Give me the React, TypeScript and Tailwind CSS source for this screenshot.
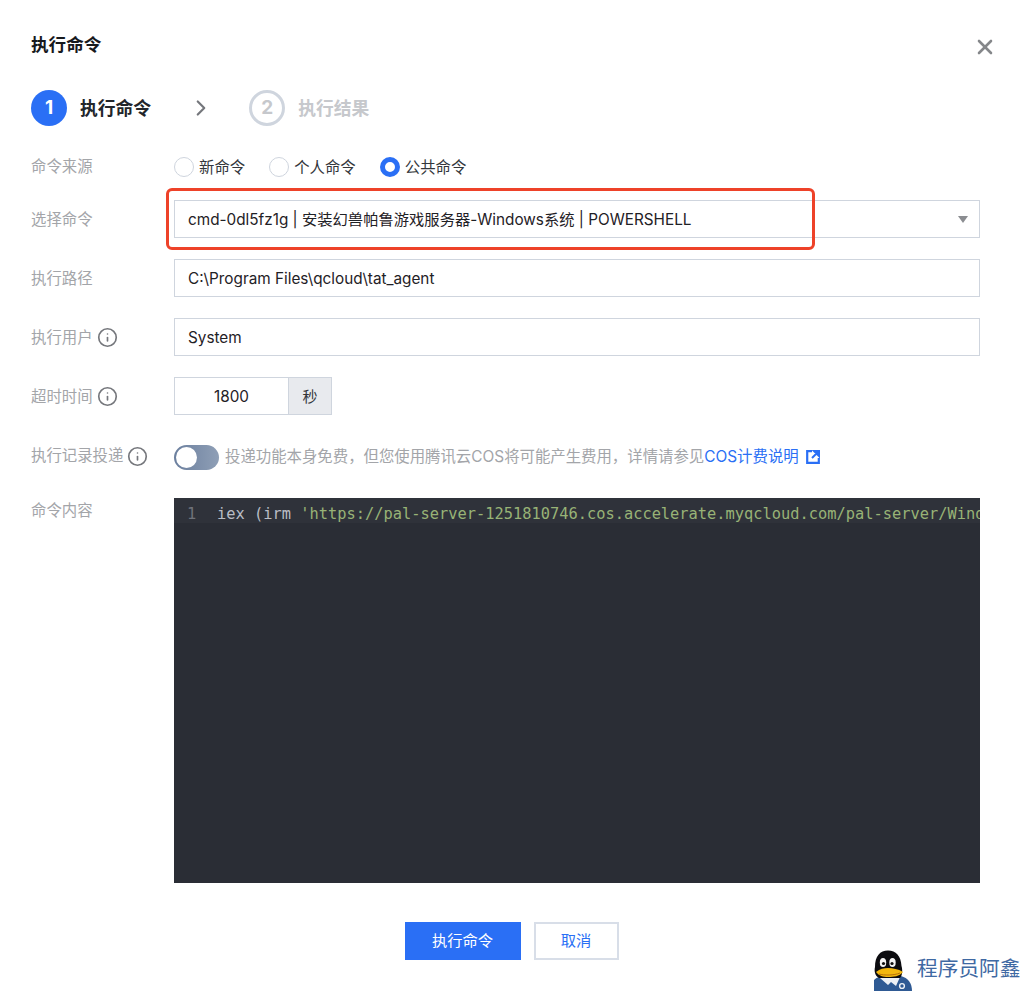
import { X, ChevronRight, Info } from "lucide-react";

const sans = "font-['Inter','Noto_Sans_CJK_SC',sans-serif]";

const Label = ({ text, tip, textClass = "mt-[2px]" }: { text: string; tip?: boolean; textClass?: string }) => (
  <div className="w-[143px] shrink-0 flex items-center gap-[4px] text-[15.4px] leading-[20px] text-[#a3a5a9]">
    <span className={textClass}>{text}</span>
    {tip && <Info size={21} strokeWidth={1.9} className="text-[#75777c]" />}
  </div>
);

const Radio = ({ text, checked }: { text: string; checked?: boolean }) => (
  <label className="flex items-center gap-[5px] text-[15.4px] leading-[20px] text-[#33363b]">
    {checked ? (
      <span className="w-[20px] h-[20px] rounded-full border-[5px] border-[#2a6ff5] bg-white" />
    ) : (
      <span className="w-[20px] h-[20px] rounded-full border border-[#cfd5de] bg-white" />
    )}
    <span className="mt-[2px]">{text}</span>
  </label>
);

const InputRow = ({ label, value, tip }: { label: string; value: string; tip?: boolean }) => (
  <div className="flex items-center">
    <Label text={label} tip={tip} />
    <div className="flex-1 h-[38px] border border-[#cfd5de] px-[13px] pt-[2px] flex items-center text-[15.3px] text-[#1f2126]">
      {value}
    </div>
  </div>
);

// 水印 logo
const Penguin = () => (
  <svg width="40" height="41" viewBox="0 0 40 41" className="shrink-0">
    <path d="M1 41 L1 30 C4 27 8 26 12 26 L28 26 C35 28 39 33 39 41 Z" fill="#2f5a94" />
    <path d="M7 28 L15 35 L18 32 L23 36 L27 27 L20 25 L10 25 Z" fill="#eef1f6" />
    <circle cx="29" cy="36" r="2.4" fill="none" stroke="#eef1f6" strokeWidth="1.4" />
    <path d="M2 17 C2 6 7 0.5 15 0.5 C23 0.5 28 6 28.5 16 C30 21 29 26 27 28 L6 28 C2 26 1 21 2 17 Z" fill="#0c0c10" />
    <ellipse cx="10" cy="12.5" rx="3.2" ry="4.6" fill="#f4f4f4" />
    <ellipse cx="19.5" cy="12.5" rx="3.2" ry="4.6" fill="#f4f4f4" />
    <circle cx="10.5" cy="13.5" r="1.6" fill="#111" />
    <circle cx="19" cy="13.5" r="1.6" fill="#111" />
    <path d="M3 22 C7 18.5 11 18 15 18 C20 18 25 19 30 22 C26 26.5 21 27 15 27 C10 27 6 26 3 22 Z" fill="#f2b70f" />
    <path d="M6 24 C11 25.5 21 25.5 27 23" stroke="#b5700a" strokeWidth="1" fill="none" />
  </svg>
);

export default function App() {
  return (
    <div className={`relative w-[1024px] h-[991px] overflow-hidden bg-white ${sans}`}>
      <div className="pl-[31px] pr-[44px]">
        {/* 标题 */}
        <div className="flex items-center justify-between pt-[33px] h-[57px]">
          <h2 className="text-[17.6px] leading-[22px] font-semibold text-[#17191d]">执行命令</h2>
          <button className="-mr-[17px] mt-[4px] text-[#85878a]">
            <X size={24} strokeWidth={2.6} />
          </button>
        </div>

        {/* 步骤 */}
        <div className="flex items-center mt-[33px] h-[36px]">
          <span className="w-[36px] h-[36px] rounded-full bg-[#2a6ff5] text-white flex items-center justify-center text-[19px] font-bold">1</span>
          <span className="ml-[13px] mt-[3px] text-[17.8px] font-semibold text-[#22252a]">执行命令</span>
          <ChevronRight size={26} strokeWidth={2} className="ml-[37px] text-[#75777c]" />
          <span className="ml-[35px] w-[36px] h-[36px] rounded-full border-[3px] border-[#cfd5de] text-[#c6c8cc] flex items-center justify-center text-[19px] font-bold">2</span>
          <span className="ml-[13px] mt-[3px] text-[17.8px] font-semibold text-[#c6c8cc]">执行结果</span>
        </div>

        {/* 表单 */}
        <div className="mt-[27px] flex items-center h-[28px]">
          <Label text="命令来源" textClass="" />
          <div className="flex items-center gap-[24px]">
            <Radio text="新命令" />
            <Radio text="个人命令" />
            <Radio text="公共命令" checked />
          </div>
        </div>

        <div className="mt-[19px] flex flex-col gap-[21px]">
          <div className="flex items-center">
            <Label text="选择命令" />
            <div className="flex-1 h-[38px] border border-[#cfd5de] pl-[13px] pr-[11px] flex items-center justify-between text-[15.3px] text-[#1f2126]">
              <span className="mt-[2px]">cmd-0dl5fz1g | 安装幻兽帕鲁游戏服务器-Windows系统 | POWERSHELL</span>
              <span className="w-0 h-0 border-x-[5.5px] border-x-transparent border-t-[7px] border-t-[#8b8d91]" />
            </div>
          </div>
          <InputRow label="执行路径" value="C:\Program Files\qcloud\tat_agent" />
          <InputRow label="执行用户" value="System" tip />
          <div className="flex items-center">
            <Label text="超时时间" tip />
            <div className="flex h-[38px]">
              <div className="w-[115px] border border-[#cfd5de] pt-[2px] flex items-center justify-center text-[15.3px] text-[#1f2126]">1800</div>
              <div className="w-[43px] border border-l-0 border-[#cfd5de] bg-[#e8eaee] pt-[2px] flex items-center justify-center text-[15px] text-[#33363b]">秒</div>
            </div>
          </div>
        </div>

        <div className="mt-[29px] flex items-center h-[26px]">
          <div className="mb-[2px]">
            <Label text="执行记录投递" tip textClass="" />
          </div>
          <span className="w-[45px] h-[25px] rounded-full bg-gradient-to-r from-[#6b7f9e] to-[#8f9fb6] flex items-center pl-[2px]">
            <span className="w-[21px] h-[21px] rounded-full bg-white" />
          </span>
          <span className="ml-[6px] text-[15.4px] text-[#a3a5a9] whitespace-nowrap">投递功能本身免费，但您使用腾讯云COS将可能产生费用，详情请参见</span>
          <span className="text-[15.4px] text-[#2a6ff5] whitespace-nowrap">COS计费说明</span>
          <svg width="14" height="14" viewBox="0 0 14 14" className="ml-[7px]">
            <path d="M6 1.2H1.2V12.8H12.8V8" fill="none" stroke="#2a6ff5" strokeWidth="2.2" />
            <path d="M8 1H13V6Z M12 2 L6 8" fill="#2a6ff5" stroke="#2a6ff5" strokeWidth="2" />
          </svg>
        </div>

        {/* 命令内容 */}
        <div className="mt-[28px] flex items-start">
          <div className="pt-[1px]">
            <Label text="命令内容" />
          </div>
          <div className="flex-1 h-[385px] bg-[#2a2d35] overflow-hidden font-['DejaVu_Sans_Mono',monospace] text-[15.37px]">
            <div className="h-[25px] pt-[8px] bg-[#2f323a] flex items-center whitespace-pre">
              <span className="w-[43px] shrink-0 pl-[13px] text-[#6f737b]">1</span>
              <span className="text-[#b9bdc5]">iex (irm </span>
              <span className="text-[#98b376]">'https://pal-server-1251810746.cos.accelerate.myqcloud.com/pal-server/Windows.ps1')</span>
            </div>
          </div>
        </div>

        {/* 按钮 */}
        <div className="mt-[39px] pl-[12px] flex justify-center gap-[13px] text-[15.3px]">
          <button className="w-[116px] h-[38px] bg-[#2a6ff5] text-white">执行命令</button>
          <button className="w-[85px] h-[38px] border-2 border-[#d8dee8] text-[#2a6ff5]">取消</button>
        </div>
      </div>

      {/* 红框标注 */}
      <div className="absolute left-[166px] top-[188px] w-[649px] h-[62px] rounded-[6px] border-[3px] border-[#ee4229]" />

      {/* 水印 */}
      <div className="absolute left-[873px] top-[950px] flex items-center gap-[4px]">
        <Penguin />
        <span className="text-[20.7px] leading-[26px] -mt-[4px] text-[#3f69a3] whitespace-nowrap">程序员阿鑫</span>
      </div>
    </div>
  );
}
